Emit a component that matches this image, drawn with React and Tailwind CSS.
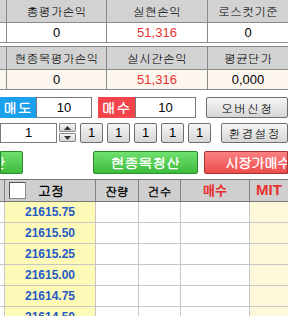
import React from "react";

const fontKr = "font-['Gulim','Noto_Sans_CJK_KR','Liberation_Sans',sans-serif]";

const summaryRows = [
  {
    labels: ["총평가손익", "실현손익", "로스컷기준"],
    values: ["0", "51,316", "0"],
    valueBg: "bg-white",
  },
  {
    labels: ["현종목평가손익", "실시간손익", "평균단가"],
    values: ["0", "51,316", "0,000"],
    valueBg: "bg-[#fdf6ef]",
  },
];

const prices = ["21615.75", "21615.50", "21615.25", "21615.00", "21614.75", "21614.50"];

function SummaryTable({ labels, values, valueBg }) {
  const widths = ["w-[7px]", "w-[100px]", "w-[101px]", "flex-1"];
  return (
    <div className="border-b border-[#8a8a8a]">
      <div className="flex h-[23px] border-b border-[#8a8a8a] bg-[#d2d2d2] text-[12px] text-black">
        {widths.map((w, i) => (
          <div key={i} className={`${w} flex items-center justify-center ${i < 3 ? "border-r border-[#8a8a8a]" : ""}`}>
            {i > 0 ? labels[i - 1] : ""}
          </div>
        ))}
      </div>
      <div className={`flex h-[19px] ${valueBg} text-[13px]`}>
        {widths.map((w, i) => (
          <div
            key={i}
            className={`${w} flex items-center justify-center font-['Liberation_Sans',sans-serif] ${i < 3 ? "border-r border-[#8a8a8a]" : ""} ${i === 2 ? "text-[#e8322f]" : "text-black"}`}
          >
            {i > 0 ? values[i - 1] : ""}
          </div>
        ))}
      </div>
    </div>
  );
}

function GrayButton({ children, className = "" }) {
  return (
    <div
      className={`flex items-center justify-center rounded-[2px] border border-[#6e6e6e] bg-gradient-to-b from-[#f6f6f6] to-[#d6d6d6] text-[12px] text-black ${className}`}
    >
      {children}
    </div>
  );
}

function Spinner() {
  return (
    <div className="flex w-[17px] flex-col gap-[1px]">
      {["up", "down"].map((d) => (
        <div
          key={d}
          className="flex h-[9px] items-center justify-center rounded-[1px] border border-[#8a8a8a] bg-gradient-to-b from-[#f4f4f4] to-[#d4d4d4]"
        >
          <svg width="7" height="4" viewBox="0 0 7 4">
            {d === "up" ? <polygon points="3.5,0 7,4 0,4" fill="#333" /> : <polygon points="0,0 7,0 3.5,4" fill="#333" />}
          </svg>
        </div>
      ))}
    </div>
  );
}

export default function App() {
  const cols = [
    { w: "w-[5px]", label: "" },
    { w: "w-[91px]", label: "고정" },
    { w: "w-[43px]", label: "잔량" },
    { w: "w-[42px]", label: "건수" },
    { w: "w-[69px]", label: "매수", red: true },
    { w: "flex-1", label: "MIT", red: true },
  ];

  return (
    <div className={`h-[316px] w-[288px] overflow-hidden bg-white ${fontKr}`}>
      <SummaryTable {...summaryRows[0]} />
      <div className="h-[3px]" />
      <div className="border-t border-[#8a8a8a]">
        <SummaryTable {...summaryRows[1]} />
      </div>

      <div className="mt-[7px] flex h-[21px] items-stretch">
        <div className="flex w-[36px] items-center justify-center bg-[#1aa0ec] text-[14px] font-bold tracking-[1px] text-white">매도</div>
        <div className="flex w-[56px] items-center justify-center border border-[#7a7a7a] font-['Liberation_Sans',sans-serif] text-[13px]">10</div>
        <div className="ml-[6px] flex w-[37px] items-center justify-center bg-[#f2444a] text-[14px] font-bold tracking-[1px] text-white">매수</div>
        <div className="flex w-[61px] items-center justify-center border border-[#7a7a7a] font-['Liberation_Sans',sans-serif] text-[13px]">10</div>
        <GrayButton className="ml-[10px] flex-1 tracking-[1px]">오버신청</GrayButton>
      </div>

      <div className="mt-[5px] flex h-[20px] items-stretch">
        <div className="flex w-[57px] items-center justify-center border border-[#7a7a7a] font-['Liberation_Sans',sans-serif] text-[13px]">1</div>
        <div className="ml-[2px]">
          <Spinner />
        </div>
        <div className="ml-[4px] flex gap-[4px]">
          {[0, 1, 2, 3, 4].map((i) => (
            <GrayButton key={i} className="w-[23px] font-['Liberation_Sans',sans-serif] text-[13px]">1</GrayButton>
          ))}
        </div>
        <GrayButton className="ml-[10px] flex-1 tracking-[1px]">환경설정</GrayButton>
      </div>

      <div className="mt-[8px] flex h-[23px] items-stretch">
        <div className="flex w-[23px] items-center justify-end overflow-hidden whitespace-nowrap rounded-r-[2px] border border-[#2c8c2c] bg-gradient-to-b from-[#6ee06e] to-[#3cbc3c] pr-[16px] text-[14px] font-bold text-white">
          <span className="shrink-0">청산</span>
        </div>
        <div className="ml-[70px] flex w-[105px] items-center justify-center rounded-[2px] border border-[#2c8c2c] bg-gradient-to-b from-[#6ee06e] to-[#3cbc3c] text-[14px] font-bold text-white">
          현종목청산
        </div>
        <div className="ml-[6px] flex flex-1 items-center overflow-hidden whitespace-nowrap rounded-l-[2px] border border-[#a83232] bg-gradient-to-b from-[#fa8080] to-[#ec4c4c] pl-[20px] text-[14px] font-bold tracking-[-1px] text-white">
          <span className="shrink-0">시장가매수</span>
        </div>
      </div>

      <div className="mt-[5px] border-t border-[#777]">
        <div className="flex h-[22px] border-b border-[#777] bg-[#cfcfcf] text-[12px] font-bold">
          {cols.map((c, i) => (
            <div
              key={i}
              className={`${c.w} flex items-center justify-center ${i < 5 ? "border-r border-[#808080]" : ""} ${c.red ? "text-[#e8302f] font-['Liberation_Sans','Noto_Sans_CJK_KR',sans-serif]" : "text-black"} ${i === 4 ? "text-[13px]" : ""} ${i === 5 ? "text-[15px]" : ""}`}
            >
              {i === 1 ? (
                <div className="flex w-full items-center pl-[4px]">
                  <div className="h-[17px] w-[17px] border border-[#8a8a8a] border-l-[#555] border-t-[#555] bg-white" />
                  <span className="ml-[12px] text-[13px]">고정</span>
                </div>
              ) : (
                c.label
              )}
            </div>
          ))}
        </div>
        {prices.map((p) => (
          <div key={p} className="flex h-[21px] border-b border-[#c6c6c6]">
            {cols.map((c, i) => (
              <div
                key={i}
                className={`${c.w} flex items-center justify-center ${i < 5 ? "border-r border-[#c6c6c6]" : ""} ${i === 1 ? "bg-[#fdf9b6]" : i === 5 ? "bg-[#fcf8d9]" : "bg-white"}`}
              >
                {i === 1 ? (
                  <span className="font-['Liberation_Sans',sans-serif] text-[12px] font-bold text-[#2459c6]">{p}</span>
                ) : null}
              </div>
            ))}
          </div>
        ))}
      </div>
    </div>
  );
}
